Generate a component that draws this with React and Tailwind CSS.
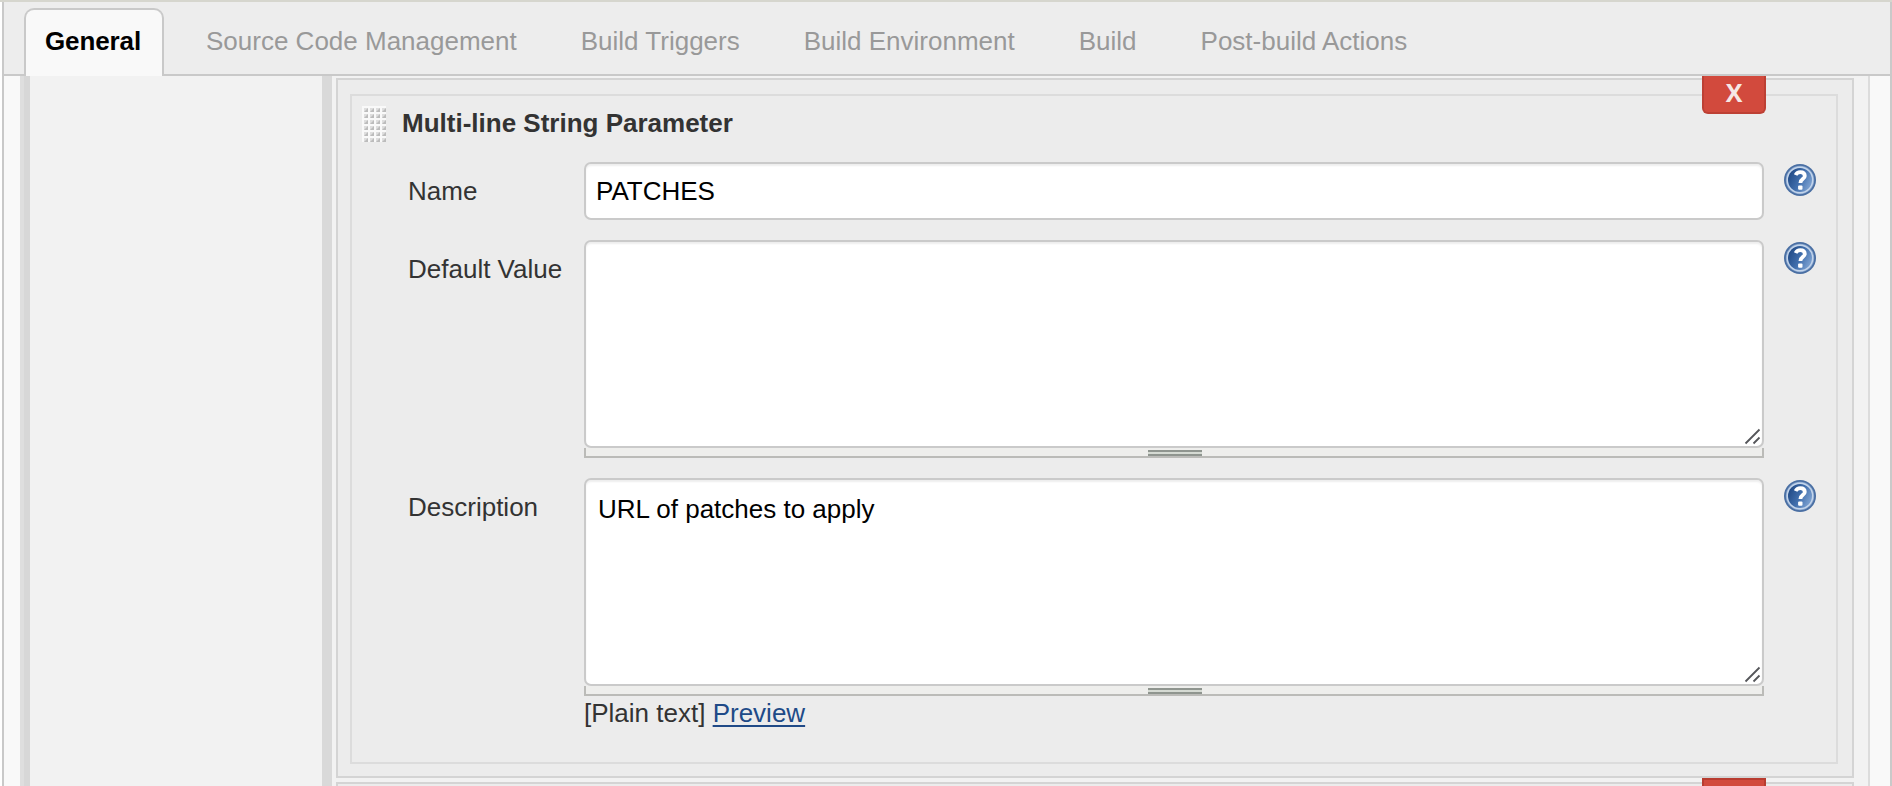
const tabs = [
  "Source Code Management",
  "Build Triggers",
  "Build Environment",
  "Build",
  "Post-build Actions",
];

function HelpIcon() {
  return (
    <svg className="ml-5 mt-0.5 size-8 shrink-0" viewBox="0 0 32 32">
      <defs>
        <linearGradient id="help" x1="0" y1="0.3" x2="1" y2="0.8">
          <stop offset="0" stopColor="#214a86" />
          <stop offset="0.5" stopColor="#4270ae" />
          <stop offset="1" stopColor="#86a9d6" />
        </linearGradient>
      </defs>
      <circle cx="16" cy="16" r="16" fill="#4a6fa3" />
      <circle cx="16" cy="16" r="14.2" fill="#88a5cd" />
      <circle cx="16" cy="16" r="13.4" fill="#c4d5eb" />
      <circle cx="16" cy="16" r="12" fill="url(#help)" />
      <path d="M11.6 11C12.6 9 14.2 8.2 16.2 8.2c2.8 0 4.6 1.4 4.6 3.7 0 3.3-4.4 3.2-4.4 7" fill="none" stroke="#fff" strokeWidth="3.8" />
      <rect x="14.1" y="21.4" width="4.4" height="4.4" rx="1" fill="#fff" />
    </svg>
  );
}

function Grip() {
  const dots = [];
  for (let y = 0; y < 6; y++) for (let x = 0; x < 4; x++) dots.push([x * 6, y * 6]);
  return (
    <svg className="h-9 w-6 shrink-0" viewBox="0 0 24 36">
      <rect width="24" height="36" fill="#f9f9f9" />
      {dots.map(([x, y]) => (
        <g key={`${x}-${y}`}>
          <rect x={x + 2} y={y + 2} width="4" height="4" fill="#dedede" />
          <path d={`M${x + 6} ${y + 2}v4h-4z`} fill="#bcbcbc" />
        </g>
      ))}
    </svg>
  );
}

function Area({ children }) {
  return (
    <div className="w-[1180px]">
      <div className="flex h-[208px] items-end justify-between rounded-[7px] border-2 border-[#cacaca] bg-white pl-3 shadow-[inset_0_2px_2px_#eeeeee]">
        <div className="h-full pt-[14px] leading-[30px] text-black">{children}</div>
        <svg className="size-[18px]" viewBox="0 0 18 18" stroke="#55565a" strokeWidth="1.8">
          <path d="M1.5 15.5L15.5 1.5M9.5 15.5l6-6" />
        </svg>
      </div>
      <div className="flex h-[10px] justify-center border-2 border-t-0 border-[#bbbbb8] bg-[#eeeeec] pl-0.5 pt-0.5">
        <div className="h-1.5 w-[54px] shrink-0 border-y-2 border-[#8f958f] bg-[#d5dad3]" />
      </div>
    </div>
  );
}

function Row({ label, children }) {
  return (
    <div className="flex items-start">
      <div className="w-[176px] shrink-0 pt-[14px] leading-[30px]">{label}</div>
      {children}
      <HelpIcon />
    </div>
  );
}

export default function App() {
  return (
    <div className="flex h-[786px] w-[1892px] flex-col overflow-hidden border-t-2 border-[#d6d6ce] bg-white pl-0.5 font-['Liberation_Sans',Arial,sans-serif] text-[26px] text-[#333]">
      <div className="flex min-h-0 flex-1 flex-col border-x-2 border-[#c9c9c9] bg-[#f9f9f9]">
        <header className="flex h-[74px] shrink-0 items-end border-b-2 border-[#c9c9c9] bg-[#ededed] pl-5">
          <div className="-mb-0.5 flex h-[68px] w-[140px] items-center justify-center rounded-t-[10px] border-2 border-b-0 border-[#c9c9c9] bg-[#f9f9f9] pb-1 pr-0.5 font-bold tracking-[-0.1px] text-black">
            General
          </div>
          <nav className="ml-[42px] flex h-[66px] items-center gap-16 text-[#999]">
            {tabs.map((t) => (
              <span key={t} className="whitespace-nowrap">{t}</span>
            ))}
          </nav>
        </header>
        <div className="flex min-h-0 flex-1 pl-4">
          <div className="w-1 bg-[#dedede]" />
          <div className="w-1.5 bg-[#d7d7d7]" />
          <div className="w-[292px] bg-[#f2f2f2]" />
          <div className="w-2.5 bg-[#d9d9d9]" />
          <main className="w-[1538px] shrink-0 border-r-2 border-[#dcdcdc] bg-[#f2f2f2] pl-1 pt-0.5">
            <section className="relative h-[700px] w-[1518px] border-2 border-[#d4d4d4] bg-[#ececec] pl-3 pr-[14px] pt-[14px]">
              <div className="h-[670px] border-2 border-[#dcdcdc] pl-2.5 pt-2.5">
                <div className="flex h-9 items-start">
                  <Grip />
                  <div className="ml-4 pt-0.5 font-bold leading-[30px]">Multi-line String Parameter</div>
                </div>
                <div className="flex flex-col gap-5 pl-[46px] pt-5">
                  <Row label="Name">
                    <div className="h-[58px] w-[1180px] rounded-[7px] border-2 border-[#cacaca] bg-white pl-2.5 pt-3 leading-[30px] text-black shadow-[inset_0_2px_2px_#eeeeee]">
                      PATCHES
                    </div>
                  </Row>
                  <Row label="Default Value">
                    <Area />
                  </Row>
                  <Row label="Description">
                    <Area>URL of patches to apply</Area>
                  </Row>
                </div>
                <div className="pl-[222px] pt-0.5 leading-[30px]">
                  [Plain text]{" "}
                  <a className="text-[#204a87] underline decoration-2 underline-offset-[3px]">Preview</a>
                </div>
              </div>
              <button className="absolute right-[86px] -top-1 h-[38px] w-16 rounded-b-[6px] border-2 border-t-0 border-[#bd4034] bg-[#d24a3d] pb-1 font-['Open_Sans',sans-serif] text-[25px] font-bold leading-[32px] text-[#f6e8e6]">
                X
              </button>
            </section>
            <section className="relative mt-1 h-10 w-[1518px] border-2 border-[#d4d4d4] bg-[#ececec]">
              <div className="absolute right-[86px] -top-1.5 h-[38px] w-16 border-2 border-[#b83c30] bg-[#d24a3d]" />
            </section>
          </main>
        </div>
      </div>
    </div>
  );
}
